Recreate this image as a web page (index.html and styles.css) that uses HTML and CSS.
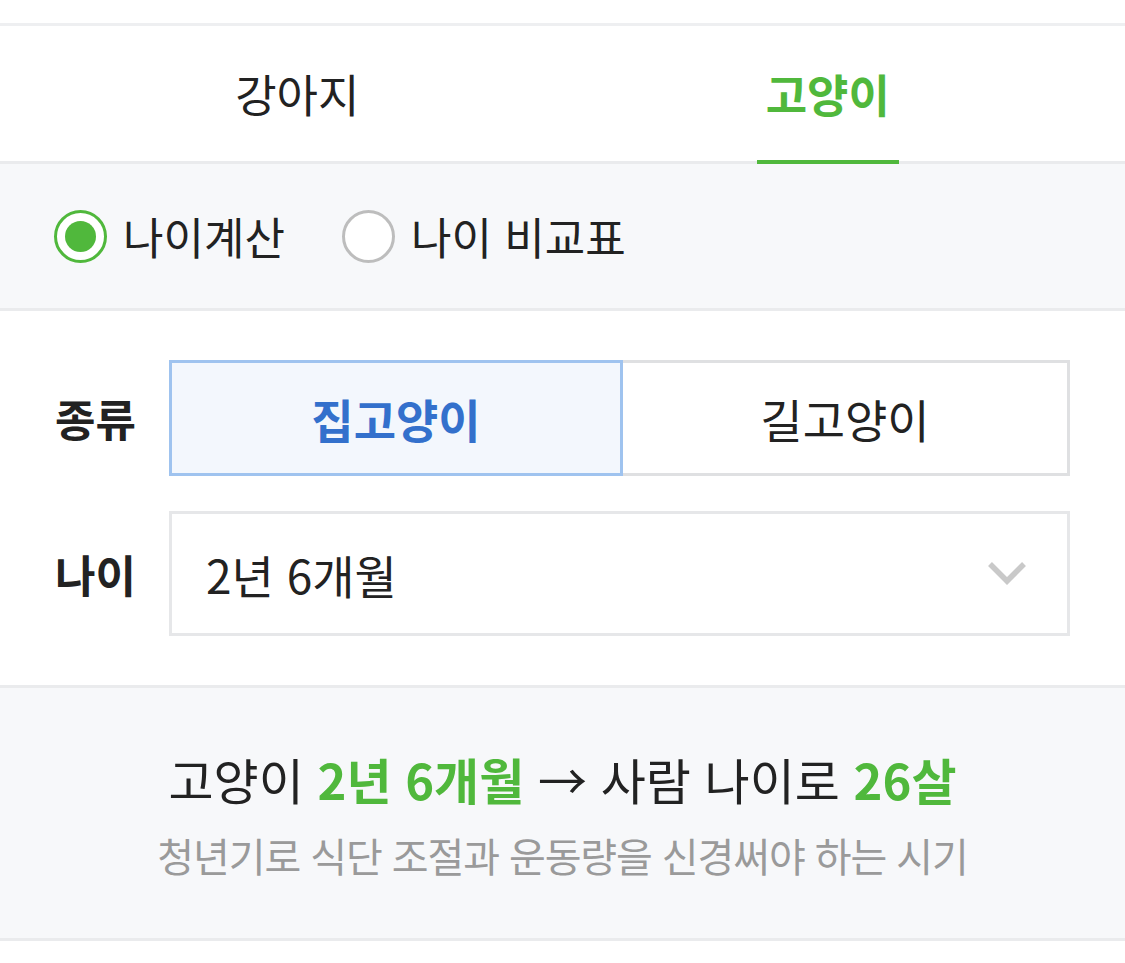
FILE: index.html
```html
<!DOCTYPE html>
<html lang="ko">
<head>
<meta charset="utf-8">
<title>나이계산</title>
<link rel="stylesheet" href="styles.css">
</head>
<body>
<div class="top-gap"></div>
<nav class="tabs">
  <div class="tab">강아지</div>
  <div class="tab active"><span class="tab-label">고양이</span></div>
</nav>
<section class="modes">
  <label class="radio checked"><span class="circle"><span class="dot"></span></span><span class="radio-text">나이계산</span></label>
  <label class="radio"><span class="circle"></span><span class="radio-text">나이 비교표</span></label>
</section>
<section class="form">
  <div class="row">
    <div class="label">종류</div>
    <div class="segment">
      <div class="seg seg-on">집고양이</div>
      <div class="seg seg-off">길고양이</div>
    </div>
  </div>
  <div class="row">
    <div class="label">나이</div>
    <div class="select">
      <span class="select-value">2년 6개월</span>
      <svg class="chevron" width="40" height="25" viewBox="0 0 40 25"><polyline points="3,3 20,20 37,3" fill="none" stroke="#c9c9c9" stroke-width="5.5"/></svg>
    </div>
  </div>
</section>
<section class="result">
  <p class="result-main">고양이 <b>2년 6개월</b> → 사람 나이로 <b>26살</b></p>
  <p class="result-sub">청년기로 식단 조절과 운동량을 신경써야 하는 시기</p>
</section>
<div class="bottom-gap"></div>
</body>
</html>
```
FILE: styles.css
```css
* { box-sizing: border-box; }
html, body { margin: 0; padding: 0; background: #fff; }
body {
  font-family: "Noto Sans CJK KR", "Noto Sans", sans-serif;
  color: #222;
  width: 1125px;
}
.top-gap { height: 23px; background: #fff; }
.tabs {
  display: grid;
  grid-template-columns: 1fr 1fr;
  padding: 0 32px;
  border-top: 3px solid #eeeff1;
  border-bottom: 3px solid #eaebed;
  background: #fff;
}
.tab {
  height: 135px;
  display: flex;
  align-items: center;
  justify-content: center;
  font-size: 45px;
  color: #222;
}
.tab.active { color: #50b83c; font-weight: 700; }
.tab-label {
  position: relative;
  height: 100%;
  display: flex;
  align-items: center;
  padding: 0 9px;
}
.tab-label::after {
  content: "";
  position: absolute;
  left: 0; right: 0;
  bottom: -3px;
  height: 4px;
  background: #50b83c;
}
.modes {
  height: 147px;
  background: #f7f8fa;
  border-bottom: 3px solid #eaebed;
  display: flex;
  align-items: center;
  padding-left: 54px;
  gap: 57px;
}
.radio { display: flex; align-items: center; gap: 16px; }
.circle {
  width: 53px; height: 53px;
  border-radius: 50%;
  border: 3px solid #bdbdbd;
  background: #fff;
  display: flex; align-items: center; justify-content: center;
}
.radio.checked .circle { border-color: #50b83c; }
.dot { width: 31px; height: 31px; border-radius: 50%; background: #50b83c; }
.radio-text { font-size: 44px; color: #222; }
.form {
  padding: 49px 55px 49px 55px;
  display: flex;
  flex-direction: column;
  gap: 35px;
  border-bottom: 3px solid #eaebed;
}
.row { display: flex; align-items: center; }
.label { width: 114px; font-size: 44px; font-weight: 700; color: #222; }
.segment { flex: 1; display: grid; grid-template-columns: 454px 1fr; height: 116px; }
.seg {
  display: flex; align-items: center; justify-content: center;
  font-size: 46px;
}
.seg-on { background: #f3f7fd; border: 3px solid #9fc3ef; color: #3370cc; font-weight: 700; }
.seg-off { background: #fff; border: 3px solid #dfe0e2; border-left: none; color: #222; }
.select {
  flex: 1;
  height: 125px;
  border: 3px solid #e6e7e9;
  display: flex; align-items: center; justify-content: space-between;
  padding: 0 40px 0 34px;
  background: #fff;
}
.select-value { font-size: 46px; color: #222; }
.result {
  background: #f7f8fa;
  border-bottom: 3px solid #eaebed;
  padding: 58px 0 55px;
  text-align: center;
}
.result p { margin: 0; }
.result-main { font-size: 49px; line-height: 66px; color: #222; }
.result-main b { color: #50b83c; font-weight: 700; }
.result-sub { margin-top: 15px !important; font-size: 40px; line-height: 56px; letter-spacing: -1.1px; color: #9a9a9a; }
.bottom-gap { height: 22px; }
```
